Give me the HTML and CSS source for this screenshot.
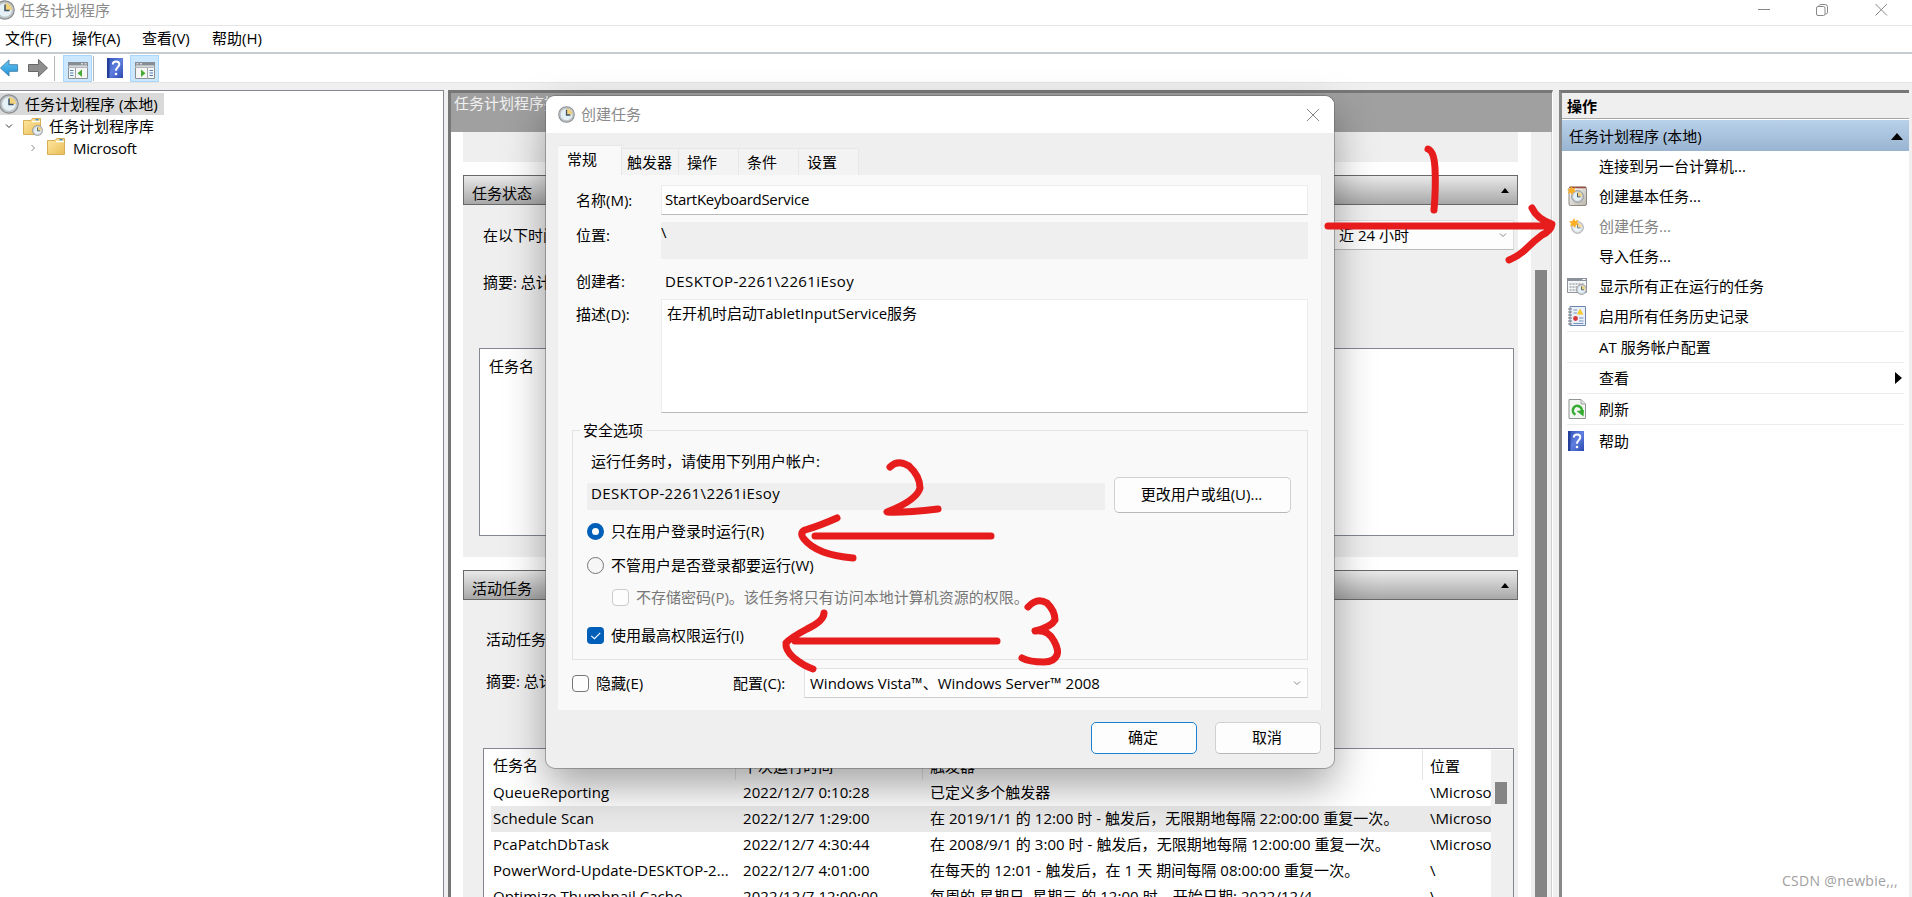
FILE: index.html
```html
<!DOCTYPE html>
<html lang="zh-CN">
<head>
  <meta charset="UTF-8" />
  <meta name="viewport" content="width=device-width, initial-scale=1.0"/>
  <title>任务计划程序</title>
  <link rel="stylesheet" href="styles.css">
</head>
<body>
  <!-- shared icons -->
  <svg class="defs">
    <defs>
      <linearGradient id="folderFill" x1="0" y1="0" x2="1" y2="1"><stop offset="0" stop-color="#ffe9a3"/><stop offset="1" stop-color="#e9bd58"/></linearGradient>
      <linearGradient id="bookFill" x1="0" y1="0" x2="1" y2="1"><stop offset="0" stop-color="#2e50b8"/><stop offset=".5" stop-color="#5f7fe0"/><stop offset="1" stop-color="#2b48b0"/></linearGradient>
      <linearGradient id="blueArrow" x1="0" y1="0" x2="0" y2="1"><stop offset="0" stop-color="#6cc4f0"/><stop offset="1" stop-color="#1a94dc"/></linearGradient>
      <linearGradient id="caseFill" x1="0" y1="0" x2="1" y2="1"><stop offset="0" stop-color="#fdfdfb"/><stop offset="1" stop-color="#b9b5ac"/></linearGradient>
    </defs>
    <symbol id="clock" viewBox="0 0 20 20">
      <circle cx="10" cy="10" r="9.2" fill="#c4c8ca" stroke="#8b8f92" stroke-width="1.2"/>
      <circle cx="10" cy="10" r="7.2" fill="#e6f0f7" stroke="#a9b3ba" stroke-width=".6"/>
      <path d="M10 10V3a7 7 0 0 1 7 7z" fill="#f3d27c"/>
      <path d="M10 4.5V10.6H14.6" fill="none" stroke="#3d5266" stroke-width="1.5"/>
    </symbol>
    <symbol id="folder" viewBox="0 0 18 17">
      <path d="M.5 2.500H8L9.500.5H17.500V16.500H.5z" fill="url(#folderFill)" stroke="#d6ae55"/>
      <path d="M9 3.500H17" stroke="#fff" stroke-width="1.500"/>
      <path d="M12.500 1.700H15.500" stroke="#3a8fd0" stroke-width="1.400"/>
    </symbol>
    <symbol id="help" viewBox="0 0 16 20">
      <path d="M0 0H16V20H0z" fill="url(#bookFill)"/>
      <path d="M0 0H2.500V20H0z" fill="#243f9a"/>
      <path d="M5.800 6.500C5.800 2.300 12.300 2.500 12.300 6.300C12.300 9 9 9.300 9 12.700" fill="none" stroke="#fff" stroke-width="2"/>
      <circle cx="9" cy="16" r="1.300" fill="#fff"/>
    </symbol>
    <symbol id="panel" viewBox="0 0 20 17">
      <path d="M.5.5H19.500V16.500H.5z" fill="#f6f6f4" stroke="#8b9097"/>
      <path d="M0 0H20V3.500H0z" fill="#878d95"/>
      <path d="M0 4.500H20V6H0z" fill="#b2b7bd"/>
      <path d="M13 1.800H15M16.500 1.800H18.500" stroke="#fff"/>
      <path d="M7.500 6V17" stroke="#9da3aa"/>
      <path d="M2 8.500H5.500M2 11H5.500M2 13.500H5.500" stroke="#4f7fb8" stroke-width="1.200"/>
      <path d="M14 7.500V15L9.500 11.200z" fill="#47ac35"/>
    </symbol>
    <symbol id="star" viewBox="0 0 10 10">
      <path d="M5 0L6.300 3L9.500 1.500L8 4.600L10 6.500L7 7L6 10L4 7.500L1 8.500L2.200 5.500L0 3.500L3.500 3z" fill="#f9ae25"/>
    </symbol>
  </svg>

  <div class="title-bar">
    <svg class="clock-icon"><use href="#clock"/></svg>
    <span class="title-text">任务计划程序</span>
    <svg class="window-buttons" viewBox="0 0 130 14">
      <path d="M0 6.500H12M117.500 1L129 12.500M129 1L117.500 12.500" />
      <rect x="58.500" y="3.500" width="8.500" height="9" rx="1.500"/>
      <path d="M61 3V2.500Q61.500 1.500 63 1.500H67Q69.500 1.500 69.500 4V9.500Q69.500 11 67.500 11"/>
    </svg>
  </div>
  <div class="menu-bar">
    <span>文件(F)</span><span>操作(A)</span><span>查看(V)</span><span>帮助(H)</span>
  </div>
  <div class="tool-bar">
    <svg class="arrow" viewBox="0 0 20 20"><path d="M.5 10L9.500 1.500V6.500H18.500V13.500H9.500V18.500z" fill="url(#blueArrow)" stroke="#4583a8"/></svg>
    <svg class="arrow forward" viewBox="0 0 20 20"><path d="M19.500 10L10.500 1.500V6.500H.5V13.500H10.500V18.500z" fill="#8e8e8e" stroke="#686868"/></svg>
    <i class="tool-sep"></i>
    <span class="tool-button tree-button"><svg><use href="#panel"/></svg></span>
    <i class="tool-sep near"></i>
    <svg class="help-icon"><use href="#help"/></svg>
    <span class="tool-button"><svg class="flip"><use href="#panel"/></svg></span>
  </div>

  <div class="workspace">
    <div class="tree">
      <div class="tree-root"><svg class="clock-icon"><use href="#clock"/></svg>任务计划程序 (本地)</div>
      <div class="tree-row">
        <svg class="chevron open" viewBox="0 0 8 8"><path d="M1 2.500L4 5.500L7 2.500"/></svg>
        <span class="folder-box"><svg class="folder"><use href="#folder"/></svg><svg class="mini-clock"><use href="#clock"/></svg></span>任务计划程序库
      </div>
      <div class="tree-row child">
        <svg class="chevron" viewBox="0 0 8 8"><path d="M2.500 1L5.500 4L2.500 7"/></svg>
        <svg class="folder"><use href="#folder"/></svg><span class="en">Microsoft</span>
      </div>
    </div>

    <div class="summary">
      <div class="summary-title">任务计划程序摘要</div>
      <div class="summary-view">
        <div class="sections">
          <div class="overview"></div>
          <div class="section-head">任务状态<svg viewBox="0 0 8 5"><path d="M0 5L4 0L8 5z"/></svg></div>
          <div class="section-body status">
            <div class="period"><span>在以下时间</span><div class="period-select">近 24 小时<svg class="chevron" viewBox="0 0 8 8"><path d="M1 2.500L4 5.500L7 2.500"/></svg></div></div>
            <div class="total">摘要: 总计</div>
            <div class="status-list">任务名</div>
          </div>
          <div class="section-head">活动任务<svg viewBox="0 0 8 5"><path d="M0 5L4 0L8 5z"/></svg></div>
          <div class="section-body active">
            <div>活动任务</div>
            <div class="active-total">摘要: 总计</div>
            <div class="task-list">
              <div class="task-table">
                <div class="task-row head"><span>任务名</span><span>下次运行时间</span><span>触发器</span><span>位置</span></div>
                <div class="task-row"><span>QueueReporting</span><span>2022/12/7 0:10:28</span><span>已定义多个触发器</span><span>\Microso</span></div>
                <div class="task-row selected"><span>Schedule Scan</span><span>2022/12/7 1:29:00</span><span>在 2019/1/1 的 12:00 时 - 触发后，无限期地每隔 22:00:00 重复一次。</span><span>\Microso</span></div>
                <div class="task-row"><span>PcaPatchDbTask</span><span>2022/12/7 4:30:44</span><span>在 2008/9/1 的 3:00 时 - 触发后，无限期地每隔 12:00:00 重复一次。</span><span>\Microso</span></div>
                <div class="task-row"><span>PowerWord-Update-DESKTOP-2...</span><span>2022/12/7 4:01:00</span><span>在每天的 12:01 - 触发后，在 1 天 期间每隔 08:00:00 重复一次。</span><span>\</span></div>
                <div class="task-row"><span>Optimize Thumbnail Cache</span><span>2022/12/7 12:00:00</span><span>每周的 星期日, 星期三 的 12:00 时，开始日期: 2022/12/4</span><span>\</span></div>
              </div>
              <div class="list-scroll"><i></i></div>
            </div>
          </div>
        </div>
        <div class="view-scroll"><i></i></div>
      </div>
    </div>

    <div class="actions">
      <div class="actions-title">操作</div>
      <div class="actions-group">任务计划程序 (本地)<svg viewBox="0 0 12 7"><path d="M0 7L6 0L12 7z"/></svg></div>
      <div class="action"><i></i>连接到另一台计算机...</div>
      <div class="action">
        <svg viewBox="0 0 20 20"><rect x="2" y="1" width="17.500" height="18.500" rx="1.500" fill="url(#caseFill)" stroke="#8d8780"/><path d="M2.500 1.500H19" stroke="#9a4b3e" stroke-width="1.500"/><use href="#clock" x="4" y="4" width="13" height="13"/><use href="#star" x="0" y="0" width="9" height="9"/></svg>
        创建基本任务...</div>
      <div class="action disabled">
        <svg viewBox="0 0 20 20"><use href="#clock" x="4" y="5" width="13" height="13" opacity=".75"/><use href="#star" x="2" y="2" width="10" height="10"/></svg>
        创建任务...</div>
      <div class="action"><i></i>导入任务...</div>
      <div class="action">
        <svg viewBox="0 0 20 20"><path d="M.5 2.500H19.500V16.500H.5z" fill="#f4f5f6" stroke="#8f959b"/><path d="M0 2H20V5H0z" fill="#8b929b"/><path d="M15.500 3.500H18.500" stroke="#fff"/><path d="M2.500 8H17M2.500 11H17M2.500 14H10" stroke="#7e858c" stroke-dasharray="2 1"/><use href="#clock" x="9" y="8" width="11" height="11"/></svg>
        显示所有正在运行的任务</div>
      <div class="action">
        <svg viewBox="0 0 20 20"><path d="M3 .5H18.500V19.500H3z" fill="#e9f0fa" stroke="#6c86b0"/><path d="M1 3H5M1 6H5M1 9H5M1 12H5M1 15H5M1 18H5" stroke="#777" stroke-width="1.200"/><path d="M6.500 4H10M6.500 7H10M12 12H16.500M12 15H16.500M6.500 17.500H16.500" stroke="#7992bd"/><path d="M10 8.500L13 2.500L16.500 8.500z" fill="#f5c927"/><circle cx="8.500" cy="12.500" r="2.400" fill="#d9363b"/></svg>
        启用所有任务历史记录</div>
      <div class="action tall"><i></i>AT 服务帐户配置</div>
      <div class="action tall"><i></i>查看<svg class="submenu" viewBox="0 0 7 12"><path d="M0 0L7 6L0 12z"/></svg></div>
      <div class="action tall">
        <svg viewBox="0 0 20 20"><path d="M2 .5H14L18.500 5V19.500H2z" fill="#f4f6f4" stroke="#8f9590"/><path d="M14 .5V5H18.500" fill="#dfe3df" stroke="#a5aaa5"/><path d="M8.500 15.500A4.500 4.500 0 1 1 14.500 13" fill="none" stroke="#35ad30" stroke-width="2.600"/><path d="M9.500 12L17 11L16.500 17.500z" fill="#35ad30"/></svg>
        刷新</div>
      <div class="action tall last"><svg class="help-icon"><use href="#help"/></svg>帮助</div>
    </div>
  </div>

  <div class="dialog">
    <div class="dialog-title">
      <svg class="dialog-clock"><use href="#clock"/></svg><span>创建任务</span>
      <svg class="close" viewBox="0 0 14 14"><path d="M1 1L13 13M13 1L1 13"/></svg>
    </div>
    <div class="tabs">
      <span class="current">常规</span><span class="wide">触发器</span><span>操作</span><span>条件</span><span>设置</span>
    </div>
    <div class="page">
      <div class="field name"><label>名称(M):</label><div class="textbox en">StartKeyboardService</div></div>
      <div class="field location"><label>位置:</label><div class="readonly">\</div></div>
      <div class="field author"><label>创建者:</label><div class="pc">DESKTOP-2261\2261iEsoy</div></div>
      <div class="field description"><label>描述(D):</label><div class="textbox">在开机时启动TabletInputService服务</div></div>

      <fieldset class="security">
        <legend>安全选项</legend>
        <div class="run-as">运行任务时，请使用下列用户帐户:</div>
        <div class="account">
          <div class="account-name pc">DESKTOP-2261\2261iEsoy</div>
          <div class="button change">更改用户或组(U)...</div>
        </div>
        <div class="option"><i class="radio checked"></i>只在用户登录时运行(R)</div>
        <div class="option second"><i class="radio"></i>不管用户是否登录都要运行(W)</div>
        <div class="option nested"><i class="check"></i>不存储密码(P)。该任务将只有访问本地计算机资源的权限。</div>
        <div class="option highest"><i class="check checked"><svg viewBox="0 0 16 16"><path d="M4 8.300L7 11L12.500 5.500"/></svg></i>使用最高权限运行(I)</div>
      </fieldset>

      <div class="configure">
        <i class="check"></i><span class="hidden-label">隐藏(E)</span><span>配置(C):</span>
        <div class="config-select">Windows Vista™、Windows Server™ 2008<svg class="chevron" viewBox="0 0 8 8"><path d="M1 2.500L4 5.500L7 2.500"/></svg></div>
      </div>
    </div>
    <div class="dialog-buttons"><div class="button primary">确定</div><div class="button">取消</div></div>
  </div>

  <!-- hand-drawn steps -->
  <svg class="marks" viewBox="0 0 1912 897">
    <path d="M1428 149Q1434 151 1435 168Q1436 188 1434 210"/>
    <path d="M1328 226H1548M1532 208Q1537 219 1552 224Q1551 231 1542 235Q1534 241 1527 248Q1519 256 1509 260"/>
    <path d="M890 467Q898 459 909 466Q920 476 920 488Q917 500 887 512Q902 513 938 509"/>
    <path d="M815 536H991M837 518Q819 526 805 530Q799 533 804 539Q817 555 853 558"/>
    <path d="M1028 607Q1037 597 1047 603Q1055 611 1055 620Q1051 627 1035 631Q1048 629 1054 641Q1059 650 1057 655Q1054 662 1044 662Q1029 662 1022 658"/>
    <path d="M795 641H997M824 613Q824 621 807 629Q790 638 786 643Q785 650 794 658Q804 666 813 669"/>
  </svg>
  <div class="watermark">CSDN @newbie,,,</div>
</body>
</html>
```
FILE: styles.css
```css
* {
  box-sizing: border-box;
}

body {
  margin: 0;
  width: 1912px;
  height: 897px;
  overflow: hidden;
  display: flex;
  flex-direction: column;
  position: relative;
  background: #efefef;
  color: #000;
  font-family: "Open Sans", "Noto Sans CJK SC", sans-serif;
  font-size: 15px;
  line-height: 20px;
  white-space: nowrap;
}

svg {
  display: block;
  flex: none;
}

.defs {
  position: absolute;
  width: 0;
  height: 0;
}

.en {
  letter-spacing: -0.3px;
}

.clock-icon {
  width: 20px;
  height: 20px;
}

.help-icon {
  width: 16px;
  height: 20px;
}

.chevron {
  width: 8px;
  height: 8px;
  fill: none;
  stroke: #888;
}

/* window frame */
.title-bar {
  height: 26px;
  flex: none;
  display: flex;
  align-items: center;
  padding-bottom: 6px;
  background: #fff;
  border-bottom: 1px solid #e6e6e6;
  color: #8a8a8a;
}

.title-bar .clock-icon {
  margin-left: -5px;
}

.title-text {
  margin-left: 5px;
}

.window-buttons {
  width: 130px;
  height: 14px;
  margin-left: auto;
  margin-right: 24px;
  fill: none;
  stroke: #888;
}

.menu-bar {
  height: 28px;
  flex: none;
  display: flex;
  align-items: center;
  padding: 0 0 2px 5px;
  background: #fff;
  border-bottom: 2px solid #c5ccd1;
}

.menu-bar span {
  width: 70px;
}

.menu-bar span:first-child {
  width: 67px;
}

.tool-bar {
  height: 29px;
  flex: none;
  display: flex;
  align-items: center;
  background: #fff;
  border-bottom: 1px solid #e4e4e4;
}

.arrow {
  width: 19px;
  height: 20px;
}

.forward {
  margin-left: 9px;
  width: 20px;
}

.tool-sep {
  width: 1px;
  height: 25px;
  margin-left: 6px;
  background: #b5b5b5;
}

.tool-sep.near {
  margin-left: 1px;
}

.tool-button {
  width: 29px;
  height: 27px;
  display: flex;
  align-items: center;
  justify-content: center;
  padding-top: 4px;
  background: #cce8ff;
  border: 1px solid #a9d6fa;
}

.tree-button {
  margin-left: 8px;
}

.tool-button svg {
  width: 20px;
  height: 17px;
}

.tool-bar .help-icon {
  margin-left: 13px;
  margin-right: 7px;
}

.flip {
  transform: scaleX(-1);
}

.workspace {
  flex: 1;
  min-height: 0;
  display: flex;
  padding-top: 7px;
}

/* left tree */
.tree {
  width: 444px;
  background: #fff;
  border-top: 1px solid #828790;
  border-right: 1px solid #828790;
  padding-top: 2px;
}

.tree-root {
  width: 164px;
  height: 22px;
  display: flex;
  align-items: center;
  background: #d9d9d9;
}

.tree-root .clock-icon {
  margin-left: -1px;
  margin-right: 6px;
}

.tree-row {
  height: 22px;
  display: flex;
  align-items: center;
  padding-left: 5px;
}

.tree-row.child {
  padding-left: 29px;
}

.tree-row .open {
  stroke: #333;
}

.folder {
  width: 18px;
  height: 17px;
}

.folder-box {
  width: 20px;
  margin: 0 6px 0 10px;
  position: relative;
}

.mini-clock {
  position: absolute;
  left: 9px;
  top: 7px;
  width: 11px;
  height: 11px;
}

.child .folder {
  margin: -3px 8px 0 10px;
}

/* middle pane */
.summary {
  width: 1105px;
  margin-left: 4px;
  display: flex;
  flex-direction: column;
  border-left: 3px solid #777;
  border-top: 3px solid #777;
  border-right: 1px solid #fff;
  background: #fff;
}

.summary-title {
  height: 39px;
  flex: none;
  padding-left: 3px;
  color: #f0f0f0;
  background: #a0a0a0;
}

.summary-view {
  flex: 1;
  min-height: 0;
  display: flex;
}

.sections {
  width: 1080px;
  padding: 0 13px 0 12px;
  overflow: hidden;
}

.overview {
  height: 30px;
  margin-bottom: 13px;
  background: #efefef;
}

.section-head {
  height: 30px;
  display: flex;
  align-items: center;
  justify-content: space-between;
  padding: 6px 8px 0;
  border: 1px solid #696969;
  background: linear-gradient(#e9e9e9, #a8a8a8);
}

.section-head svg {
  width: 8px;
  height: 5px;
  margin-top: -6px;
}

.section-body {
  background: #efefef;
}

.status {
  height: 352px;
  margin-bottom: 13px;
  padding: 15px 4px 0 16px;
}

.period {
  display: flex;
  align-items: center;
  justify-content: space-between;
  padding-left: 4px;
}

.period-select {
  width: 240px;
  height: 30px;
  display: flex;
  align-items: center;
  padding: 0 6px 0 64px;
  background: #fdfdfd;
  border: 1px solid #ddd;
  border-bottom-color: #bbb;
}

.period-select .chevron {
  margin-left: auto;
}

.total {
  margin: 22px 0 0 4px;
}

.status-list {
  height: 188px;
  margin-top: 56px;
  padding: 7px 9px;
  background: #fff;
  border: 1px solid #828790;
}

.active {
  height: 400px;
  padding: 29px 4px 0 23px;
}

.active-total {
  margin-top: 22px;
}

.task-list {
  height: 300px;
  margin: 57px 0 0 -3px;
  display: flex;
  background: #fff;
  border: 1px solid #828790;
}

.task-table {
  width: 1007px;
  overflow: hidden;
  padding-left: 7px;
}

.task-row {
  height: 26px;
  display: grid;
  grid-template-columns: 244px 187px 500px 200px;
  align-items: center;
  padding-bottom: 2px;
}

.task-row span {
  padding-left: 2px;
  letter-spacing: 0.05px;
}

.task-row span:nth-child(n+2) {
  padding-left: 8px;
}

.task-row.head {
  height: 31px;
  padding: 0;
}

.task-row.head span + span {
  height: 30px;
  line-height: 32px;
  border-left: 1px solid #e5e5e5;
  padding-left: 7px;
}

.task-row.selected {
  background: #e9e9e9;
}

.list-scroll {
  width: 22px;
  margin-top: 1px;
  padding: 32px 0 0 4px;
  background: #efefef;
}

.list-scroll i {
  display: block;
  width: 12px;
  height: 22px;
  background: #858585;
}

.view-scroll {
  width: 21px;
  padding: 138px 0 0 4px;
  background: #efefef;
  border-right: 1px solid #d0d0d0;
}

.view-scroll i {
  display: block;
  width: 12px;
  height: 100%;
  background: #858585;
}

/* actions pane */
.actions {
  width: 350px;
  margin-left: 6px;
  background: #fff;
  border-left: 3px solid #888;
  border-top: 3px solid #777;
}

.actions-title {
  height: 26px;
  padding: 3px 5px 0;
  font-weight: bold;
  background: #efefef;
  border-bottom: 1px solid #a5a5a5;
}

.actions-group {
  height: 31px;
  margin-top: 1px;
  display: flex;
  align-items: center;
  justify-content: space-between;
  padding: 1px 6px 0 7px;
  background: linear-gradient(#b9d1ea, #99b4d1);
}

.actions-group svg {
  width: 12px;
  height: 7px;
}

.action {
  height: 30px;
  display: flex;
  align-items: center;
  margin: 0 5px;
}

.action > svg:first-child {
  width: 20px;
  height: 20px;
  margin-right: 12px;
}

.action > .help-icon:first-child {
  width: 16px;
  margin: 0 15px 0 1px;
}

.action i {
  width: 32px;
}

.action.disabled {
  color: #838383;
}

.action.tall {
  height: 31px;
  border-top: 1px solid #ececec;
}

.action.last {
  height: 32px;
}

.submenu {
  width: 7px;
  height: 12px;
  margin-left: auto;
  margin-right: 2px;
}

/* create task dialog */
.dialog {
  position: absolute;
  left: 546px;
  top: 96px;
  width: 788px;
  height: 672px;
  display: flex;
  flex-direction: column;
  background: #efefef;
  border-radius: 9px;
  overflow: hidden;
  box-shadow: 0 0 0 1px rgba(90, 90, 90, 0.45), 0 18px 42px rgba(0, 0, 0, 0.36);
}

.dialog-title {
  height: 37px;
  flex: none;
  display: flex;
  align-items: center;
  padding: 0 14px 0 12px;
  background: #fff;
  color: #8a8a8a;
}

.dialog-title span {
  padding-bottom: 2px;
}

.dialog-clock {
  width: 17px;
  height: 17px;
  margin-right: 6px;
}

.close {
  width: 14px;
  height: 14px;
  margin-left: auto;
  stroke: #888;
}

.tabs {
  height: 42px;
  flex: none;
  display: flex;
  align-items: flex-end;
  padding-left: 12px;
}

.tabs span {
  width: 60px;
  height: 27px;
  padding: 3px 0 0 8px;
  background: #f3f3f3;
  border: 1px solid #e7e7e7;
  border-left: none;
  border-bottom: none;
}

.tabs .wide {
  width: 57px;
  padding-left: 5px;
}

.tabs .current {
  width: 64px;
  height: 30px;
  padding-left: 9px;
  background: #f9f9f9;
}

.page {
  width: 764px;
  height: 535px;
  flex: none;
  margin-left: 12px;
  padding: 10px 13px 0 14px;
  background: #f9f9f9;
  border-right: 1px solid #e9e9e9;
}

.field {
  display: flex;
}

.field label {
  width: 89px;
  padding-left: 4px;
}

.textbox {
  flex: 1;
  background: #fff;
  border: 1px solid #ececec;
  border-bottom-color: #b9b9b9;
}

.pc {
  letter-spacing: 0.4px;
}

.name {
  height: 37px;
}

.name label {
  padding-top: 5px;
}

.name .textbox {
  height: 30px;
  padding: 3px;
}

.location {
  height: 49px;
}

.location label {
  padding-top: 3px;
}

.readonly {
  flex: 1;
  height: 37px;
  background: #efefef;
}

.author {
  height: 28px;
}

.author .pc {
  padding-left: 4px;
}

.description {
  height: 114px;
}

.description label {
  padding-top: 5px;
}

.description .textbox {
  padding: 3px 5px;
}

.security {
  height: 240px;
  margin: 7px 0 0;
  padding: 11px 14px 0;
  border: 1px solid #e3e3e3;
}

.security legend {
  height: 20px;
  margin-left: -7px;
  padding: 0 3px;
}

.run-as {
  padding-left: 4px;
}

.account {
  height: 36px;
  display: flex;
  align-items: center;
  gap: 9px;
  margin-top: 6px;
}

.account-name {
  width: 518px;
  height: 27px;
  margin-top: 2px;
  padding: 0 4px;
  background: #efefef;
}

.button {
  width: 106px;
  height: 32px;
  display: flex;
  align-items: center;
  justify-content: center;
  padding: 0 2px 2px 0;
  background: #fdfdfd;
  border: 1px solid #d0d0d0;
  border-bottom-color: #b8b8b8;
  border-radius: 5px;
}

.change {
  width: 177px;
  height: 36px;
}

.option {
  height: 20px;
  display: flex;
  align-items: center;
  gap: 7px;
  margin-top: 8px;
}

.radio {
  width: 17px;
  height: 17px;
  border: 1px solid #777;
  border-radius: 50%;
  background: #f6f6f6;
}

.radio.checked {
  border: 5px solid #005fb8;
  background: #fff;
}

.check {
  width: 17px;
  height: 17px;
  border: 1px solid #777;
  border-radius: 4px;
  background: #fdfdfd;
}

.check.checked {
  border: none;
  background: #005fb8;
}

.check path {
  fill: none;
  stroke: #fff;
}

.option.second {
  margin-top: 14px;
}

.option.nested {
  margin: 12px 0 0 25px;
  color: #777;
}

.nested .check {
  border-color: #ccc;
}

.option.highest {
  margin-top: 18px;
}

.configure {
  height: 30px;
  display: flex;
  align-items: center;
  margin-top: 8px;
}

.hidden-label {
  width: 137px;
  margin-left: 7px;
}

.config-select {
  width: 504px;
  height: 30px;
  display: flex;
  align-items: center;
  margin-left: auto;
  padding: 0 6px 1px 5px;
  background: #fdfdfd;
  border: 1px solid #e2e2e2;
  border-bottom-color: #ccc;
}

.config-select .chevron {
  margin-left: auto;
}

.dialog-buttons {
  display: flex;
  justify-content: flex-end;
  gap: 18px;
  padding: 12px 13px 0;
}

.primary {
  border-color: #1a80d2;
}

.marks {
  position: absolute;
  left: 0;
  top: 0;
  width: 1912px;
  height: 897px;
  fill: none;
  stroke: #e71d1d;
  stroke-width: 7;
  stroke-linecap: round;
  stroke-linejoin: round;
}

.watermark {
  position: absolute;
  right: 14px;
  bottom: 6px;
  color: #a0a0a0;
  font-size: 14px;
  letter-spacing: 0.3px;
}
```
